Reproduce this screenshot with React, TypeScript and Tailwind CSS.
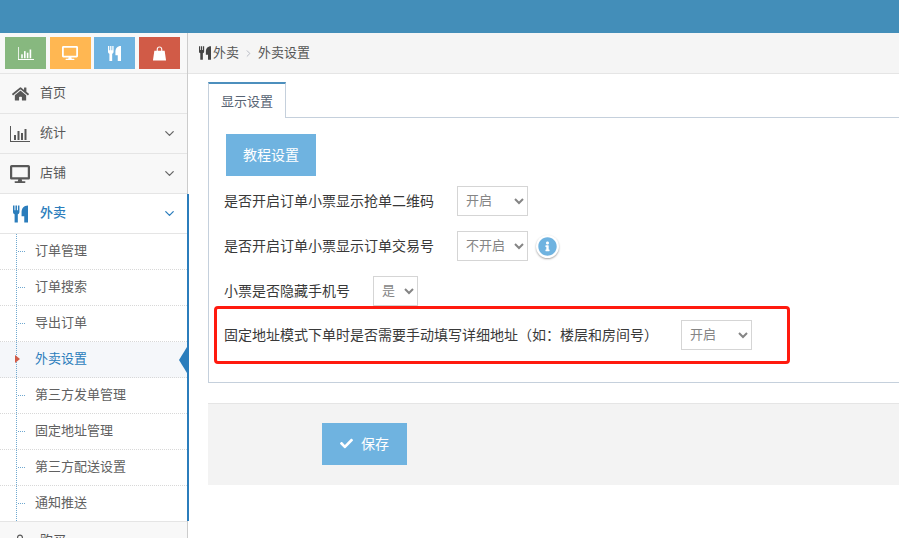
import React from "react";
import { FaHome, FaDesktop, FaCheck, FaInfoCircle } from "react-icons/fa";
import { FiChevronDown, FiChevronRight } from "react-icons/fi";

const font = { fontFamily: '"Noto Sans CJK SC", "Noto Sans", sans-serif' };

function BarIcon({ className }: { className?: string }) {
  return (
    <svg viewBox="0 0 20 16" className={className} fill="currentColor">
      <path d="M0 0h1v15h19v1H0z" />
      <rect x="4" y="9" width="2" height="5" />
      <rect x="7.5" y="5" width="2" height="9" />
      <rect x="11" y="7" width="2" height="7" />
      <rect x="14.5" y="3" width="2" height="11" />
    </svg>
  );
}

function Cutlery({ className }: { className?: string }) {
  return (
    <svg viewBox="0 0 14 16" className={className} fill="currentColor">
      <path d="M0 0h1.400v4.500h.9V0h1.400v4.500h.9V0H6v6.200c0 1.100-.7 1.800-1.500 2.100V16h-3V8.300C.7 8 0 7.300 0 6.200z" />
      <path d="M14 0C9.800 0 8 2.800 8 6.500V10h2.500v6H14z" />
    </svg>
  );
}

function Bag({ className }: { className?: string }) {
  return (
    <svg viewBox="0 0 16 16" className={className} fill="currentColor">
      <path fillRule="evenodd" d="M5 5V3.500C5 1.700 6.300.5 8 .5s3 1.200 3 3V5h2.500L15 15.500H1L2.500 5zM6.200 5h3.600V3.500C9.800 2.400 9 1.700 8 1.700s-1.800.7-1.800 1.800z" />
    </svg>
  );
}

function NavItem({ icon, label, chevron, active }: { icon: React.ReactNode; label: string; chevron?: boolean; active?: boolean }) {
  return (
    <div className={`flex items-center h-10 border-b border-[#e5e5e5] ${active ? "bg-white text-[#2b7dbc] font-medium" : "bg-[#f8f8f8] text-[#585858]"}`}>
      <div className="w-10 flex justify-center shrink-0">{icon}</div>
      <span className="text-[13px] leading-none flex-1 -mt-[4px]">{label}</span>
      {chevron && <FiChevronDown className={`w-[15px] h-[15px] mr-[10px] ${active ? "text-[#2b7dbc]" : "text-[#666]"}`} />}
    </div>
  );
}

function SubItem({ label, active, last }: { label: string; active?: boolean; last?: boolean }) {
  return (
    <div className={`relative flex items-center pl-[35px] text-[13px] ${last ? "h-[35px]" : "h-9 border-b border-dotted border-[#d8d8d8]"} ${active ? "bg-[#f5f7fa] text-[#2b7dbc]" : "bg-white text-[#616161]"}`}>
      <span className="-mt-[4px]">{label}</span>
      {active ? (
        <>
          <span className="absolute z-10 left-[15px] top-[13px] border-y-[4px] border-y-transparent border-l-[5px] border-l-[#d15b47]" />
          <span className="absolute right-0 top-[5px] border-y-[13px] border-y-transparent border-r-[8px] border-r-[#2b7dbc]" />
        </>
      ) : (
        <span className="absolute left-[18px] top-[17px] w-[7px] border-t border-dotted border-[#6fa8d0]" />
      )}
    </div>
  );
}

function Sel({ options, className }: { options: string[]; className: string }) {
  return (
    <select style={font} className={`h-[30px] border border-[#d5d5d5] bg-white text-[13px] text-[#858585] pl-[4px] pb-[3px] ${className}`} defaultValue={options[0]}>
      {options.map((o) => (
        <option key={o}>{o}</option>
      ))}
    </select>
  );
}

export default function App() {
  return (
    <div style={font} className="w-[899px] h-[538px] overflow-hidden bg-white flex flex-col text-[#393939]">
      <div className="h-[33px] bg-[#438eb9] shrink-0" />
      <div className="flex flex-1 min-h-0">
        <aside className="w-[188px] shrink-0 border-r border-[#cccccc] bg-[#f8f8f8] relative z-10">
          <div className="h-[41px] border-b border-[#e5e5e5] flex gap-[3.5px] pl-[5px] pt-[4px]">
            <div className="w-[41px] h-8 bg-[#87b87f] flex items-center justify-center text-white"><BarIcon className="w-4 h-[13px]" /></div>
            <div className="w-[41px] h-8 bg-[#ffb752] flex items-center justify-center text-white"><FaDesktop className="w-4 h-4" /></div>
            <div className="w-[41px] h-8 bg-[#6fb3e0] flex items-center justify-center text-white"><Cutlery className="w-[13px] h-[15px]" /></div>
            <div className="w-[41px] h-8 bg-[#d15b47] flex items-center justify-center text-white"><Bag className="w-[15px] h-[15px]" /></div>
          </div>
          <NavItem icon={<FaHome className="w-[17px] h-[16px] text-[#585858]" />} label="首页" />
          <NavItem icon={<BarIcon className="w-5 h-4 text-[#585858]" />} label="统计" chevron />
          <NavItem icon={<FaDesktop className="w-5 h-[18px] text-[#585858]" />} label="店铺" chevron />
          <div className="border-r-2 border-[#2b7dbc] -mr-[2px] relative">
            <NavItem icon={<Cutlery className="w-[15px] h-[18px] text-[#2b7dbc]" />} label="外卖" chevron active />
            <div className="relative">
              <SubItem label="订单管理" />
              <SubItem label="订单搜索" />
              <SubItem label="导出订单" />
              <SubItem label="外卖设置" active />
              <SubItem label="第三方发单管理" />
              <SubItem label="固定地址管理" />
              <SubItem label="第三方配送设置" />
              <SubItem label="通知推送" last />
              <span className="absolute left-[16px] top-0 bottom-0 border-l border-dotted border-[#6fa8d0]" />
            </div>
          </div>
          <div className="border-t border-[#e5e5e5]">
            <NavItem icon={<Bag className="w-4 h-4 text-[#585858]" />} label="购买" />
          </div>
        </aside>

        <main className="flex-1 min-w-0">
          <div className="h-[41px] bg-[#f5f5f5] border-b border-[#e5e5e5] flex items-center pl-[11px] text-[13px] text-[#555]">
            <Cutlery className="w-[12px] h-[14px] text-[#444] mr-[2px]" />
            <span className="-mt-[2px]">外卖</span>
            <FiChevronRight className="w-[11px] h-[11px] mx-[4px] text-[#b2b6bf]" />
            <span className="-mt-[2px]">外卖设置</span>
          </div>

          <div className="pl-5 pt-2">
            <div className="flex -mb-[1px] relative z-10">
              <div className="h-[36px] w-[78px] bg-white border border-[#c5d0dc] border-b-0 border-t-2 border-t-[#4c8fbd] flex items-center justify-center text-[13px] text-[#576373]">
                显示设置
              </div>
            </div>
            <div className="h-[266px] border border-[#c5d0dc] border-r-0 pl-[15px] pt-[16px] text-[14px]">
              <button className="block ml-[2px] w-[90px] h-[42px] pb-[2px] bg-[#6fb3e0] text-white text-[14px]">教程设置</button>
              <div className="flex items-center h-[30px] mt-[10px]">
                <span className="w-[233px] -mt-[2px]">是否开启订单小票显示抢单二维码</span>
                <Sel options={["开启"]} className="w-[71px]" />
              </div>
              <div className="flex items-center h-[30px] mt-[15px]">
                <span className="w-[233px] -mt-[2px]">是否开启订单小票显示订单交易号</span>
                <Sel options={["不开启"]} className="w-[71px]" />
                <span className="ml-[8px] w-[23px] h-[23px] rounded-full bg-white shadow-[0_1px_2px_rgba(0,0,0,0.35)] flex items-center justify-center">
                  <FaInfoCircle className="w-[19px] h-[19px] text-[#6fb3e0]" />
                </span>
              </div>
              <div className="flex items-center h-[30px] mt-[15px]">
                <span className="w-[149px] -mt-[2px]">小票是否隐藏手机号</span>
                <Sel options={["是"]} className="w-[45px]" />
              </div>
              <div className="flex items-center w-[576px] h-[58px] -ml-[10px] pl-[7px] border-[3px] border-[#ff1a0f] rounded-[4px]">
                <span className="w-[457px] whitespace-nowrap -mt-[2px]">固定地址模式下单时是否需要手动填写详细地址（如：楼层和房间号）</span>
                <Sel options={["开启"]} className="w-[71px]" />
              </div>
            </div>

            <div className="mt-[20px] h-[82px] bg-[#f3f3f3] border-t border-[#e5e5e5] pl-[114px] pt-[19px]">
              <button className="w-[85px] h-[42px] pb-[2px] bg-[#6fb3e0] text-white text-[14px] flex items-center justify-center gap-[8px]">
                <FaCheck className="w-[13px] h-[13px]" />
                保存
              </button>
            </div>
          </div>
        </main>
      </div>
    </div>
  );
}
